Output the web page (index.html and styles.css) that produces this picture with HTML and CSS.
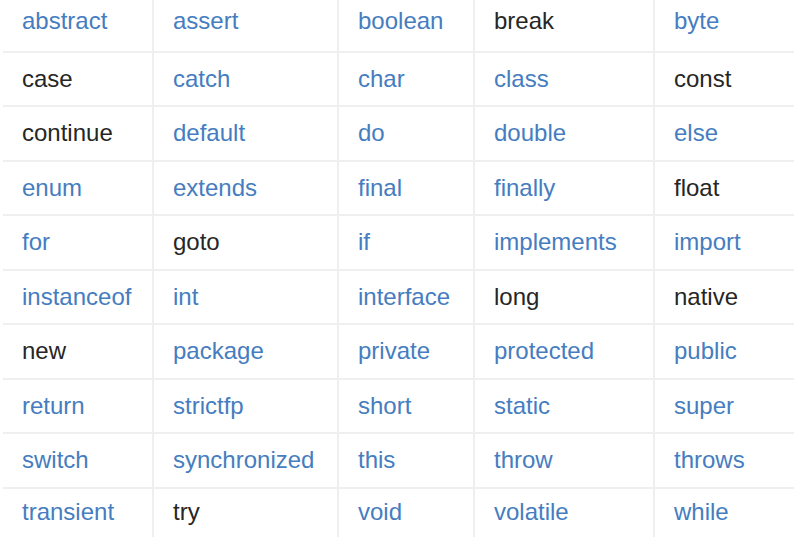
FILE: index.html
```html
<!DOCTYPE html>
<html lang="en">
<head>
<meta charset="utf-8">
<title>Java keywords</title>
<link rel="stylesheet" href="styles.css">
</head>
<body>
<div class="kw-table">
  <div class="cell link">abstract</div><div class="cell link">assert</div><div class="cell link">boolean</div><div class="cell">break</div><div class="cell link">byte</div>
  <div class="cell">case</div><div class="cell link">catch</div><div class="cell link">char</div><div class="cell link">class</div><div class="cell">const</div>
  <div class="cell">continue</div><div class="cell link">default</div><div class="cell link">do</div><div class="cell link">double</div><div class="cell link">else</div>
  <div class="cell link">enum</div><div class="cell link">extends</div><div class="cell link">final</div><div class="cell link">finally</div><div class="cell">float</div>
  <div class="cell link">for</div><div class="cell">goto</div><div class="cell link">if</div><div class="cell link">implements</div><div class="cell link">import</div>
  <div class="cell link">instanceof</div><div class="cell link">int</div><div class="cell link">interface</div><div class="cell">long</div><div class="cell">native</div>
  <div class="cell">new</div><div class="cell link">package</div><div class="cell link">private</div><div class="cell link">protected</div><div class="cell link">public</div>
  <div class="cell link">return</div><div class="cell link">strictfp</div><div class="cell link">short</div><div class="cell link">static</div><div class="cell link">super</div>
  <div class="cell link">switch</div><div class="cell link">synchronized</div><div class="cell link">this</div><div class="cell link">throw</div><div class="cell link">throws</div>
  <div class="cell link">transient</div><div class="cell">try</div><div class="cell link">void</div><div class="cell link">volatile</div><div class="cell link">while</div>
</div>
</body>
</html>
```

FILE: styles.css
```css
html, body {
  margin: 0;
  padding: 0;
  background: #ffffff;
  overflow: hidden;
}

.kw-table {
  display: grid;
  grid-template-columns: 149px 185px 136px 180px 1fr;
  grid-template-rows: repeat(9, 54.5px) 50px;
  margin: -4px 0 0 3px;
  font-family: "Liberation Sans", Arial, sans-serif;
  font-size: 24px;
  color: #262626;
}

.cell {
  box-sizing: border-box;
  display: flex;
  align-items: center;
  padding-left: 19px;
  border-top: 2px solid #efefef;
  border-left: 2px solid #efefef;
  white-space: nowrap;
}

.cell:nth-child(5n+1) {
  border-left: none;
}

.cell:nth-child(-n+5) {
  border-top: none;
  padding-bottom: 4px;
}

.cell:nth-child(n+46) {
  padding-bottom: 2px;
}

.link {
  color: #457dc0;
}
```
